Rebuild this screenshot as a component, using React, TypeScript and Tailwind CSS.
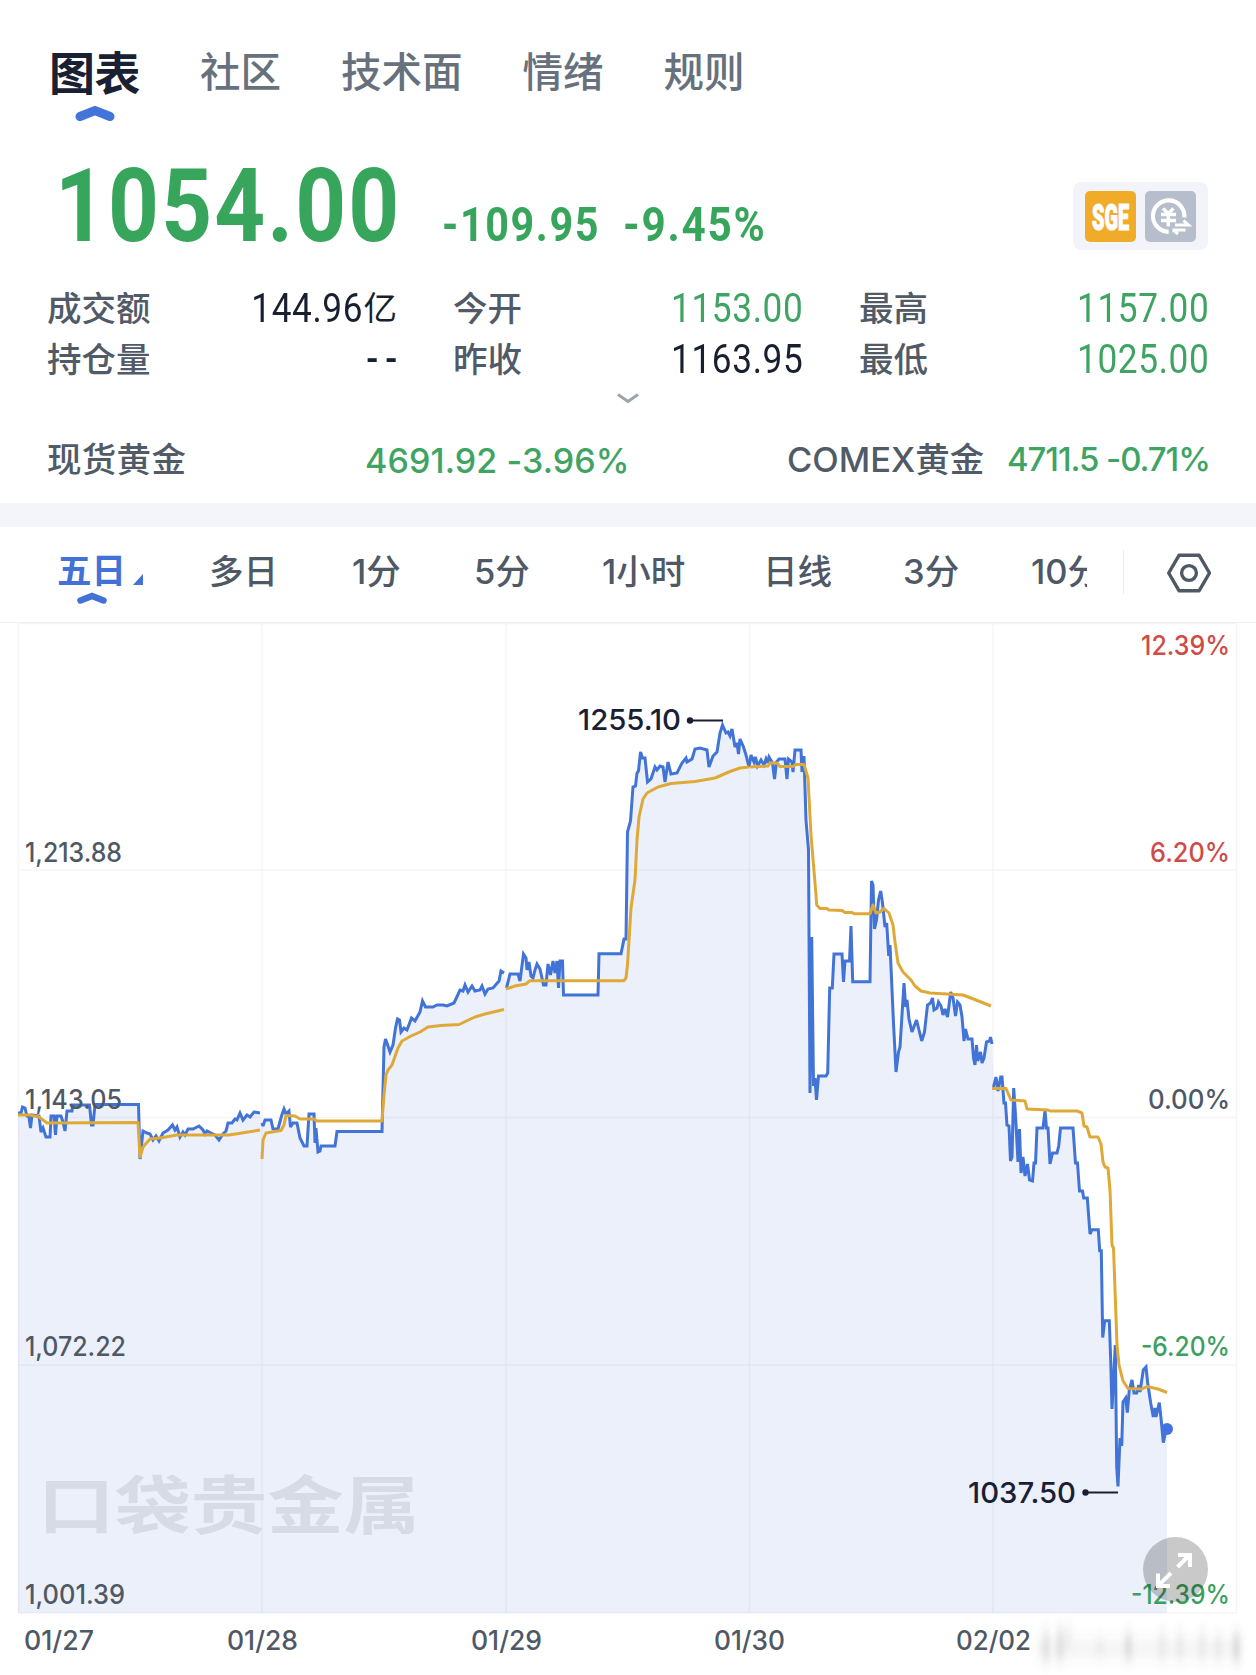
import type { ReactNode } from "react";
import clsx from "clsx";

const CHART_BOTTOM = 1613;

const TABS = ["社区", "技术面", "情绪", "规则"];

type Tone = "down" | "plain";

const STATS: { label: string; value: string; unit?: string; tone: Tone }[] = [
	{ label: "成交额", value: "144.96", unit: "亿", tone: "plain" },
	{ label: "今开", value: "1153.00", tone: "down" },
	{ label: "最高", value: "1157.00", tone: "down" },
	{ label: "持仓量", value: "--", tone: "plain" },
	{ label: "昨收", value: "1163.95", tone: "plain" },
	{ label: "最低", value: "1025.00", tone: "down" },
];

const PERIODS = [
	{ label: "多日", className: "w-[69px] ml-[64px]" },
	{ label: "1分", className: "w-[52px] ml-[74px]" },
	{ label: "5分", className: "w-[57px] ml-[70px]" },
	{ label: "1小时", className: "w-[89px] ml-[71px]" },
	{ label: "日线", className: "w-[69px] ml-[72px]" },
	{ label: "3分", className: "w-[57px] ml-[71px]" },
	{ label: "10分", className: "w-[56px] ml-[71px]" },
];

// One polyline per trading day, so the line breaks between sessions.
const PRICE = [
	"18,1113 21,1113 22.5,1107 25,1108 27,1116 29,1117 30.5,1128 32,1115 39,1116 41,1132 43,1128 46,1137 50,1137 51,1116 54,1116 55.5,1135 57,1116 61,1116 63,1122 65,1131 67,1111 72,1111 72.5,1105 89.5,1105 91.5,1125 93,1125 95,1104.5 138.5,1104.5 140,1159 143,1131 147,1133 150,1134 153,1140 156,1136 159,1141 163,1133 168,1130 172.5,1125 175,1130 177,1127 180,1137 183,1132 185,1135 188,1129 193,1129 199,1126 203,1130 205,1134 207,1131 211,1133 215,1135 219,1140 223,1134 226,1131 228,1123 232,1123 235,1119 237,1120 240,1113 243,1120 247,1115 250,1117 254,1112 260,1113",
	"262,1123 263,1126 265,1120 271,1120 273,1129 278,1129 281.5,1116 284,1109 286,1114 289,1111 290.5,1127 293,1123 297,1123 300,1138 304,1146 307,1146 309,1114 314,1114 315,1143 316,1128 318,1152 320,1151 321,1146 335,1146 337,1131.5 382,1131.5 384,1047 385.5,1039 388,1046 390,1052 393,1045 395.5,1028 397.5,1019 399.5,1020 401,1032 404,1028 407,1030 411.5,1018 415,1021 420,1012 422.5,1001 425.5,1007 433,1007 437,1005 443,1005 447,1006 454,1003 460,990 463,991 465,985 468,992 472,986 475,991 480,990 482,986 485,994 488,989 493,988 499,981 501,971 504,973",
	"506.5,988 510,974 515,974 518,974 520,981 523.5,954 526,958 527,970 529,962 531,976 533,978 535,970 537,964 540,969 543.5,985 546,985 548,964 550.5,975 553,961 555,973 557,961 558.5,988 560,961 562.5,961 563.5,995 598,995 599,953.7 621,953.7 624,939 626,939 627.5,832 630.5,821 633,787 635.5,786 637,773 638.5,771 640.5,752 642.5,758 645,758 647.5,782 651,779 655,767 657,770 660,766 663,767 665,782 668,762 671,774 677,773 682,763 686,758 687,762 692,759 695,749 700,748 707,750 709,767 713,756 717,752 720,733 722.5,725 726,733 728,732 730,736 732,729 735,747 737,743 738.5,754 740,739 743.5,747 746,755 749,767",
	"749,767 751,755 754,762 755.5,757 757.5,766 761,760 764,765 766,759 767.5,763 769,757 772.5,763 774.5,779 776.5,762 779,759 785,759 787,779 788.5,759 792,762 793,772 795,750 798,750 801,750 802,772 804,756 806,820 808.5,850 810,1093 811.7,937 813.5,1086 815,1078 816.5,1100 818.5,1076 826,1076 827.7,1073 829.7,988 832.3,988 834,954 842,954 843.5,982 845,961 849.5,961 851,926 852.7,981.7 870,981.7 871.5,881 873,885 874.5,929 876.5,920 878.5,900 880.7,891 882.5,903 885,927 886.7,923 888.7,956 890,945 893.5,1023 896,1072 898.5,1052 900,1047 904,983 905.7,1007 907,1000 909,1019 912,1032 916.5,1020 919,1030 921.7,1041 924.5,1032 927.5,1005 930.5,1003 932.5,998 934,1010 937,1008 938.5,1002 941,1006 943,1015 945,1009 947.5,1017 950.7,992 953,998 955.5,1016 957.5,1002 960,1005 962,1017 964,1041 965.5,1029 968,1039 972,1039 973.5,1058 975,1065 976.5,1045 977.7,1061 980.5,1052 982,1063 984,1058 986.5,1042 989.5,1041 990.5,1037 992,1044",
	"993.5,1087 996,1077 998,1091 1000.7,1077 1002,1077 1004,1103 1005.5,1103 1007,1125 1009,1126 1010.5,1161 1012,1157 1013.7,1088 1015.5,1115 1018,1162 1019.5,1129 1021,1173 1023,1157 1025,1176 1027.5,1164 1029.5,1180 1032.5,1181 1034,1163 1035.5,1163 1037,1128 1043,1128 1045,1111 1046.5,1128 1048,1128 1050,1164 1052.5,1153 1057,1153 1058.7,1146 1060.5,1128 1073,1128 1075.5,1163 1077.5,1163 1079.5,1191 1082.5,1191 1083.7,1198 1087.3,1198 1090,1234 1092,1229.7 1098.3,1229.7 1099.7,1250.7 1101.3,1250.7 1102.7,1337.5 1104.7,1320.7 1109.3,1320.7 1110.7,1360 1112,1409 1115.3,1345 1116.7,1467 1118,1486.5 1120,1438 1121.7,1446 1123,1402 1125.7,1398 1127.3,1412.7 1129.3,1390 1132,1380 1134,1393 1136.7,1393 1138.7,1385 1140,1392 1143.3,1370 1146,1367 1147.7,1383 1150.7,1403 1153.3,1417 1155,1408 1156,1417 1159.3,1402.7 1161,1418 1163.3,1442.7 1165.5,1432 1167,1429",
];

const AVERAGE = [
	"18,1115 30,1115 39,1117 47,1123 138,1122.5 140,1157 143,1147 150,1139 160,1138 177,1135 215,1135 229,1135 245,1132.5 260,1130",
	"262,1159 263,1140 266,1133 281,1130.5 284,1125 286,1115.5 295,1116 300,1119 314,1119 317,1121 382,1121 384,1095 386,1075 388,1070 392,1065 398,1048 402,1041 411,1036 420,1032 428,1027 441,1025.5 459,1024.5 475,1017 485,1014 504,1009.5",
	"506,989 515,986 526,984 530,980.7 624,980.7 626,978 627.5,965 631,908 635,880 637,840 639,817 643,799 647,793 658,787 671,783.5 695,781.5 715,778 730,771.5 740,768 749,767",
	"750,767 768,766 770,763 777,763 780,766.5 793,766.5 796,764.5 804,764.5 808,778 811,835 816,895 816.7,905 820,908.5 827,908.5 829,910 842,910.5 845,912.5 852,912.5 854,913.8 870,913.8 873,905 876,913 880,912 884,908.5 889,913 893,925 895,942 898,963 903,972 911,980 915,986 921,991 930,993 963,995 976,1000 991,1006",
	"992,1088.5 1006,1088.5 1011,1100 1025,1101 1027,1109 1048,1110 1050,1111 1077,1111 1082,1113 1084,1126 1087,1127 1090,1137 1098,1137 1101,1144 1103,1162 1105,1167 1108,1168 1110,1190 1112,1245 1113.5,1248 1117,1345 1119,1365 1123,1381 1128,1388.5 1142,1389 1147,1386.5 1158,1389 1167,1392.5",
];

type Label = { text: string; x: number; y: number; width: number; fill: string };

const GREY = "#4f5865";
const RED = "#cf4b48";
const GREEN = "#3d9f5f";

const LABELS: Label[] = [
	{ text: "1,213.88", x: 25, y: 861.5, width: 97, fill: GREY },
	{ text: "1,143.05", x: 25, y: 1108.5, width: 97, fill: GREY },
	{ text: "1,072.22", x: 25, y: 1355.5, width: 101, fill: GREY },
	{ text: "1,001.39", x: 25, y: 1603.5, width: 100, fill: GREY },
	{ text: "12.39%", x: 1141, y: 654.5, width: 89, fill: RED },
	{ text: "6.20%", x: 1150, y: 861.5, width: 80, fill: RED },
	{ text: "0.00%", x: 1148, y: 1108.5, width: 82, fill: GREY },
	{ text: "-6.20%", x: 1141, y: 1355.5, width: 89, fill: GREEN },
	{ text: "-12.39%", x: 1131, y: 1603.5, width: 99, fill: GREEN },
	{ text: "01/27", x: 24, y: 1649.5, width: 70, fill: GREY },
	{ text: "01/28", x: 227, y: 1649.5, width: 71, fill: GREY },
	{ text: "01/29", x: 471, y: 1649.5, width: 71, fill: GREY },
	{ text: "01/30", x: 714, y: 1649.5, width: 71, fill: GREY },
	{ text: "02/02", x: 956, y: 1649.5, width: 75, fill: GREY },
];

// The fill runs on across the gap between sessions, so it is one shape.
const AREA = `M18 ${CHART_BOTTOM}L${PRICE.join(" ")}L1167 ${CHART_BOTTOM}Z`;

// Narrow numeral style used by the quote header.
function Digits({
	children,
	className,
}: {
	children: ReactNode;
	className?: string;
}) {
	return (
		<span
			className={clsx(
				"inline-block whitespace-nowrap font-['Roboto','Liberation_Sans',sans-serif]",
				className,
			)}
		>
			{children}
		</span>
	);
}

function TabBar() {
	return (
		<nav className="flex h-[126px] items-start gap-[60px] pl-[49px] pt-[38px] text-[40.5px] leading-[70px] font-medium text-[#67717d]">
			<div className="flex flex-col items-center">
				<span className="text-[46px] leading-[70px] font-bold tracking-[-0.5px] text-[#1a2033]">
					图表
				</span>
				<svg width="40" height="18" viewBox="0 0 40 18" className="-mt-1">
					<path
						d="M5 12.500 20 6.500 35 12.500"
						fill="none"
						stroke="#4274da"
						strokeWidth="9"
						strokeLinecap="round"
						strokeLinejoin="miter"
					/>
				</svg>
			</div>
			{TABS.map((tab) => (
				<span key={tab}>{tab}</span>
			))}
		</nav>
	);
}

function MarketBadges() {
	return (
		<div className="mt-[56px] flex h-[68px] w-[135px] gap-[9px] rounded-lg bg-[#f3f4f9] pl-3 pt-[9px]">
			<svg width="51" height="51" viewBox="0 0 51 51" className="overflow-visible">
				<rect width="51" height="51" rx="5" fill="#f0ac28" />
				<text
					x="7"
					y="38.500"
					textLength="37"
					lengthAdjust="spacingAndGlyphs"
					className="fill-white stroke-white font-['Roboto','Liberation_Sans',sans-serif] text-[36px] font-black"
					strokeWidth="1.200"
				>
					SGE
				</text>
			</svg>
			<svg width="51" height="51" viewBox="0 0 51 51">
				<rect width="51" height="51" rx="5" fill="#b6becb" />
				<g fill="none" stroke="#fff">
					<path d="M39.300 26.500A15.700 15.700 0 1 0 23.700 40.800" strokeWidth="4.200" />
					<path
						d="M18 17.500 23.200 22.500 28.500 17.500M16 23.500H31M16 29.500H31M23.300 21V35.500"
						strokeWidth="3.400"
					/>
					<path d="M30 34H43.500L38.500 29.500M27.500 39H40.500M28 39 33 43" strokeWidth="3" />
				</g>
			</svg>
		</div>
	);
}

function Quote() {
	return (
		<section className="flex h-[155px] justify-between pl-[55px] pr-12 text-[#38a55d]">
			<div className="flex items-baseline">
				<Digits className="w-[354px] origin-left scale-x-[0.87] text-[102px] leading-[160px] font-bold tracking-[2.5px]">
					1054.00
				</Digits>
				<Digits className="ml-[33px] w-[181px] origin-left scale-x-[0.86] text-[48px] font-bold tracking-[1.9px]">
					-109.95
				</Digits>
				<Digits className="w-[160px] origin-left scale-x-[0.88] text-[48px] font-bold tracking-[2px]">
					-9.45%
				</Digits>
			</div>
			<MarketBadges />
		</section>
	);
}

function Stats() {
	return (
		<section className="grid grid-cols-3 gap-x-14 px-[47px]">
			{STATS.map((stat) => (
				<div
					key={stat.label}
					className="flex h-[51px] items-center justify-between text-[34.5px] font-medium text-[#515a67]"
				>
					<span className="pt-px">{stat.label}</span>
					<span
						className={clsx(
							"flex items-center",
							stat.tone === "down" ? "text-[#3fa463]" : "text-[#181f2f]",
						)}
					>
						<Digits
							className={clsx(
								"origin-right scale-x-[0.88] text-[40px] leading-[50px]",
								stat.value === "--"
									? "-mr-[7px] font-medium tracking-[8px]"
									: "font-normal tracking-[0.7px]",
							)}
						>
							{stat.value}
						</Digits>
						{stat.unit ? (
							<span className="text-[33.500px] leading-[51px] font-normal">
								{stat.unit}
							</span>
						) : null}
					</span>
				</div>
			))}
		</section>
	);
}

function Related() {
	return (
		<section className="flex h-[91px] items-center pl-[47px] pt-[5px] text-[34.5px] font-medium text-[#515a67]">
			<span className="w-[318px] tracking-[0.3px]">现货黄金</span>
			<span className="w-[422px] text-[34px] tracking-[0.1px] text-[#3fa463]">
				4691.92 -3.96%
			</span>
			<span className="w-[220px] whitespace-nowrap">COMEX黄金</span>
			<span className="whitespace-nowrap text-[33px] tracking-[-1.1px] text-[#3fa463]">
				4711.5 -0.71%
			</span>
		</section>
	);
}

function PeriodBar() {
	return (
		<nav className="flex h-[96px] items-start border-b border-[#eeeff2] pt-[18px] pl-[57px] text-[34.5px] leading-[54px] font-medium text-[#4f5865]">
			<div className="w-[88px]">
				<div className="flex h-[54px] items-end text-[#4272d6]">
					<span className="h-[55px] font-bold">五日</span>
					<svg width="10" height="11" viewBox="0 0 10 11" className="mb-[14px] ml-[7px]">
						<path d="M10 0V11H0Z" fill="#4272d6" />
					</svg>
				</div>
				<svg width="32" height="14" viewBox="0 0 32 14" className="ml-[19px] -mt-2">
					<path
						d="M4.500 9.500 16 5 27.500 9.500"
						fill="none"
						stroke="#4272d6"
						strokeWidth="6.500"
						strokeLinecap="round"
					/>
				</svg>
			</div>
			{PERIODS.map((period) => (
				<span
					key={period.label}
					className={clsx(
						"shrink-0 overflow-hidden whitespace-nowrap",
						period.className,
					)}
				>
					{period.label}
				</span>
			))}
			<span className="mt-[5px] ml-9 h-11 w-px bg-[#eaebef]" />
			<svg
				width="46"
				height="42"
				viewBox="0 0 46 42"
				className="mt-[7px] ml-[42px]"
				fill="none"
				stroke="#4f5865"
				strokeWidth="3.400"
			>
				<path d="M13 3.300H33.200L43.500 21 33.200 38.700H13L2.700 21Z" strokeLinejoin="round" />
				<circle cx="23" cy="21" r="7.400" />
			</svg>
		</nav>
	);
}

function Chart() {
	return (
		<svg
			width="1256"
			height="1052"
			viewBox="0 623 1256 1052"
			className="block font-['Inter','Liberation_Sans',sans-serif]"
		>
			<defs>
				<filter id="smudge" x="-10%" y="-40%" width="120%" height="180%">
					<feGaussianBlur stdDeviation="3 7" />
				</filter>
			</defs>
			<path d={AREA} fill="#ebf0fb" />
			<path
				d="M18.500 623.500H1236.500V1613H18.500ZM262 623V1613M506 623V1613M749.500 623V1613M993 623V1613M18 870H1236M18 1117.500H1236M18 1365H1236"
				fill="none"
				stroke="#28324f"
				strokeOpacity="0.05"
				strokeWidth="1.500"
			/>
			<text
				x="38"
				y="1528"
				textLength="382"
				lengthAdjust="spacingAndGlyphs"
				fill="#d8dae6"
				className="font-['Noto_Sans_CJK_SC',sans-serif] text-[63px] font-bold"
			>
				口袋贵金属
			</text>
			<g fill="none" strokeWidth="3" strokeLinejoin="miter" strokeMiterlimit="3">
				{PRICE.map((day) => (
					<polyline key={day} points={day} stroke="#4273d6" />
				))}
				{AVERAGE.map((day) => (
					<polyline key={day} points={day} stroke="#dfa938" strokeLinejoin="round" />
				))}
			</g>
			<circle cx="1167" cy="1429" r="6" fill="#4274e0" />
			{LABELS.map((label) => (
				<text
					key={label.text}
					x={label.x}
					y={label.y}
					textLength={label.width}
					lengthAdjust="spacingAndGlyphs"
					fill={label.fill}
					className="text-[26.5px] font-medium"
				>
					{label.text}
				</text>
			))}
			<g fill="#1a2033" className="text-[29px] font-medium">
				<text x="578" y="730" textLength="103" lengthAdjust="spacingAndGlyphs">
					1255.10
				</text>
				<circle cx="690" cy="720.500" r="3.200" />
				<rect x="690" y="719.500" width="33" height="2" />
				<text x="968" y="1503" textLength="108" lengthAdjust="spacingAndGlyphs">
					1037.50
				</text>
				<circle cx="1085.500" cy="1492.500" r="3.200" />
				<rect x="1085" y="1491.500" width="33" height="2" />
			</g>
			<circle cx="1175.500" cy="1569.500" r="32.500" fill="#000" fillOpacity="0.21" />
			<path
				d="M1177.500 1567 1190 1554.500M1178 1555H1190V1567M1171 1573 1158 1586M1158 1573.500V1586H1170"
				fill="none"
				stroke="#fff"
				strokeWidth="4"
			/>
			<g filter="url(#smudge)" fill="#555">
				<rect x="1036" y="1640" width="206" height="18" fillOpacity="0.07" />
				<rect x="1044" y="1630" width="4" height="32" fillOpacity="0.22" />
				<rect x="1058" y="1628" width="4" height="32" fillOpacity="0.25" />
				<rect x="1066" y="1626" width="4" height="20" fillOpacity="0.15" />
				<rect x="1098" y="1636" width="4" height="20" fillOpacity="0.1" />
				<rect x="1126" y="1632" width="5" height="28" fillOpacity="0.22" />
				<rect x="1160" y="1630" width="4" height="30" fillOpacity="0.13" />
				<rect x="1178" y="1630" width="4" height="30" fillOpacity="0.13" />
				<rect x="1200" y="1630" width="4" height="30" fillOpacity="0.13" />
				<rect x="1216" y="1634" width="4" height="26" fillOpacity="0.13" />
				<rect x="1234" y="1632" width="5" height="30" fillOpacity="0.24" />
			</g>
		</svg>
	);
}

export default function App() {
	return (
		<main className="h-[1675px] w-[1256px] overflow-hidden bg-white font-['Inter','Noto_Sans_CJK_SC',sans-serif]">
			<TabBar />
			<Quote />
			<div className="h-[2px]" />
			<Stats />
			<div className="flex h-[27px] items-center justify-center">
				<svg width="24" height="13" viewBox="0 0 24 13" fill="none">
					<path d="M2 2.500 12 9.500 22 2.500" stroke="#9da3aa" strokeWidth="3" />
				</svg>
			</div>
			<Related />
			<div className="h-6 bg-[#f4f5fa]" />
			<PeriodBar />
			<Chart />
		</main>
	);
}
